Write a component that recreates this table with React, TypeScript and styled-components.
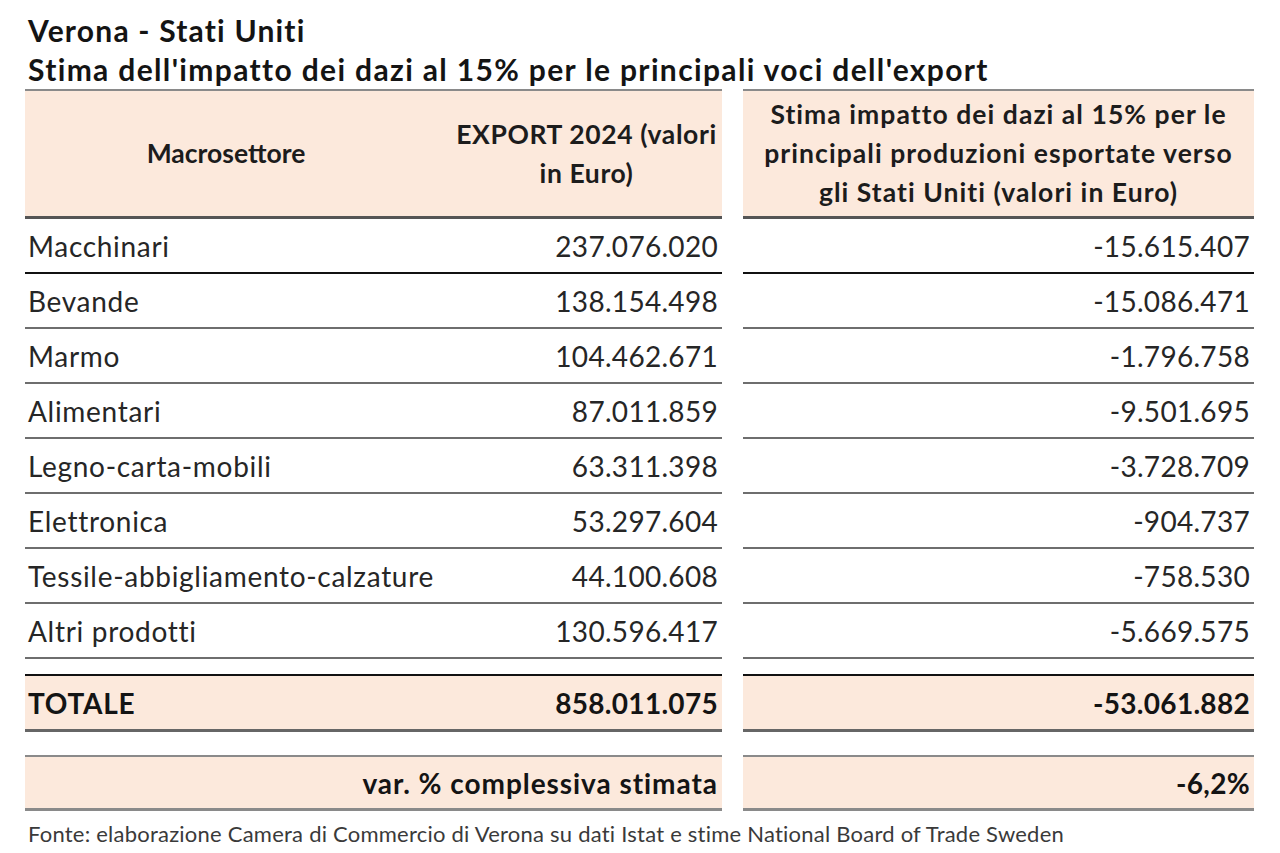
import styled, { createGlobalStyle } from "styled-components";

interface SectorRow {
  name: string;
  export2024: string;
  impact: string;
}

const ROWS: SectorRow[] = [
  { name: "Macchinari", export2024: "237.076.020", impact: "-15.615.407" },
  { name: "Bevande", export2024: "138.154.498", impact: "-15.086.471" },
  { name: "Marmo", export2024: "104.462.671", impact: "-1.796.758" },
  { name: "Alimentari", export2024: "87.011.859", impact: "-9.501.695" },
  { name: "Legno-carta-mobili", export2024: "63.311.398", impact: "-3.728.709" },
  { name: "Elettronica", export2024: "53.297.604", impact: "-904.737" },
  {
    name: "Tessile-abbigliamento-calzature",
    export2024: "44.100.608",
    impact: "-758.530",
  },
  { name: "Altri prodotti", export2024: "130.596.417", impact: "-5.669.575" },
];

export default function App(): JSX.Element {
  return (
    <>
      <GlobalStyle />
      <Page>
        <Title>Verona - Stati Uniti</Title>
        <Subtitle>
          Stima dell'impatto dei dazi al 15% per le principali voci dell'export
        </Subtitle>

        <HeaderRow>
          <LeftPanel>
            <HeaderCell $width={402} $spacing={0}>
              Macrosettore
            </HeaderCell>
            <HeaderCell $width={295} $spacing={0.6} $indent={24}>
              EXPORT 2024 (valori
              <br />
              in Euro)
            </HeaderCell>
          </LeftPanel>
          <RightPanel>
            <HeaderCell $width={511} $spacing={1.05}>
              Stima impatto dei dazi al 15% per le
              <br />
              principali produzioni esportate verso
              <br />
              gli Stati Uniti (valori in Euro)
            </HeaderCell>
          </RightPanel>
        </HeaderRow>

        {ROWS.map((row, i) => (
          <DataRow key={row.name} $strong={i === 0}>
            <LeftPanel>
              <NameCell>{row.name}</NameCell>
              <NumberCell>{row.export2024}</NumberCell>
            </LeftPanel>
            <RightPanel>
              <NumberCell>{row.impact}</NumberCell>
            </RightPanel>
          </DataRow>
        ))}

        <TotalRow>
          <LeftPanel>
            <NameCell>TOTALE</NameCell>
            <NumberCell>858.011.075</NumberCell>
          </LeftPanel>
          <RightPanel>
            <NumberCell>-53.061.882</NumberCell>
          </RightPanel>
        </TotalRow>

        <VarRow>
          <LeftPanel>
            <LabelCell>var. % complessiva stimata</LabelCell>
          </LeftPanel>
          <RightPanel>
            <NumberCell>-6,2%</NumberCell>
          </RightPanel>
        </VarRow>

        <Source>
          Fonte: elaborazione Camera di Commercio di Verona su dati Istat e
          stime National Board of Trade Sweden
        </Source>
      </Page>
    </>
  );
}

const GlobalStyle = createGlobalStyle`
  body {
    margin: 0;
    background: #ffffff;
    font-family: Lato, "Open Sans", sans-serif;
    color: #222;
  }
`;

const PEACH = "#fce9dc";

const Page = styled.div`
  width: 1280px;
  padding: 12px 0 0 25px;
  box-sizing: border-box;
`;

const Title = styled.div`
  font-size: 30px;
  font-weight: 700;
  line-height: 37px;
  letter-spacing: 1.2px;
  color: #141414;
  padding-left: 3px;
  white-space: nowrap;
`;

const Subtitle = styled(Title)`
  line-height: 40px;
  letter-spacing: 1.35px;
`;

const Row = styled.div`
  display: flex;
  gap: 21px;
  width: 1229px;
`;

const LeftPanel = styled.div`
  display: flex;
  width: 697px;
  height: 100%;
`;

const RightPanel = styled.div`
  display: flex;
  width: 511px;
  height: 100%;
`;

const HeaderRow = styled(Row)`
  height: 130px;

  ${LeftPanel}, ${RightPanel} {
    background: ${PEACH};
    border-top: 2px solid #8a8a8a;
    border-bottom: 3px solid #555;
    box-sizing: border-box;
  }
`;

const HeaderCell = styled.div<{
  $width: number;
  $spacing: number;
  $indent?: number;
}>`
  width: ${(p) => p.$width}px;
  padding-left: ${(p) => p.$indent ?? 0}px;
  box-sizing: border-box;
  display: flex;
  align-items: center;
  justify-content: center;
  text-align: center;
  white-space: nowrap;
  font-size: 26.5px;
  font-weight: 700;
  letter-spacing: ${(p) => p.$spacing}px;
  line-height: 39px;
  color: #1c1c1c;
`;

const DataRow = styled(Row)<{ $strong: boolean }>`
  height: 55px;

  ${LeftPanel}, ${RightPanel} {
    border-bottom: 2px solid ${(p) => (p.$strong ? "#111" : "#6e6e6e")};
    box-sizing: border-box;
  }
`;

const NameCell = styled.div`
  flex: 1;
  display: flex;
  align-items: center;
  padding-left: 3px;
  font-size: 28px;
  letter-spacing: 0.7px;
  color: #262626;
  white-space: nowrap;
`;

const NumberCell = styled.div`
  flex: 1;
  display: flex;
  align-items: center;
  justify-content: flex-end;
  padding-right: 4px;
  font-size: 28px;
  letter-spacing: 0.3px;
  color: #262626;
  white-space: nowrap;
`;

const LabelCell = styled(NumberCell)`
  letter-spacing: 0.95px;
`;

const TotalRow = styled(Row)`
  height: 58px;
  margin-top: 15px;

  ${LeftPanel}, ${RightPanel} {
    background: ${PEACH};
    border-top: 2px solid #111;
    border-bottom: 3px solid #666;
    box-sizing: border-box;
  }

  ${NameCell}, ${NumberCell} {
    font-weight: 700;
    color: #141414;
  }
`;

const VarRow = styled(Row)`
  height: 56px;
  margin-top: 23px;

  ${LeftPanel}, ${RightPanel} {
    background: ${PEACH};
    border-top: 2px solid #8a8a8a;
    border-bottom: 3px solid #8a8a8a;
    box-sizing: border-box;
  }

  ${NumberCell} {
    font-weight: 700;
    color: #141414;
  }
`;

const Source = styled.div`
  margin-top: 10px;
  padding-left: 3px;
  font-size: 22px;
  letter-spacing: 0.23px;
  line-height: 26px;
  color: #3a3a3a;
  white-space: nowrap;
`;
